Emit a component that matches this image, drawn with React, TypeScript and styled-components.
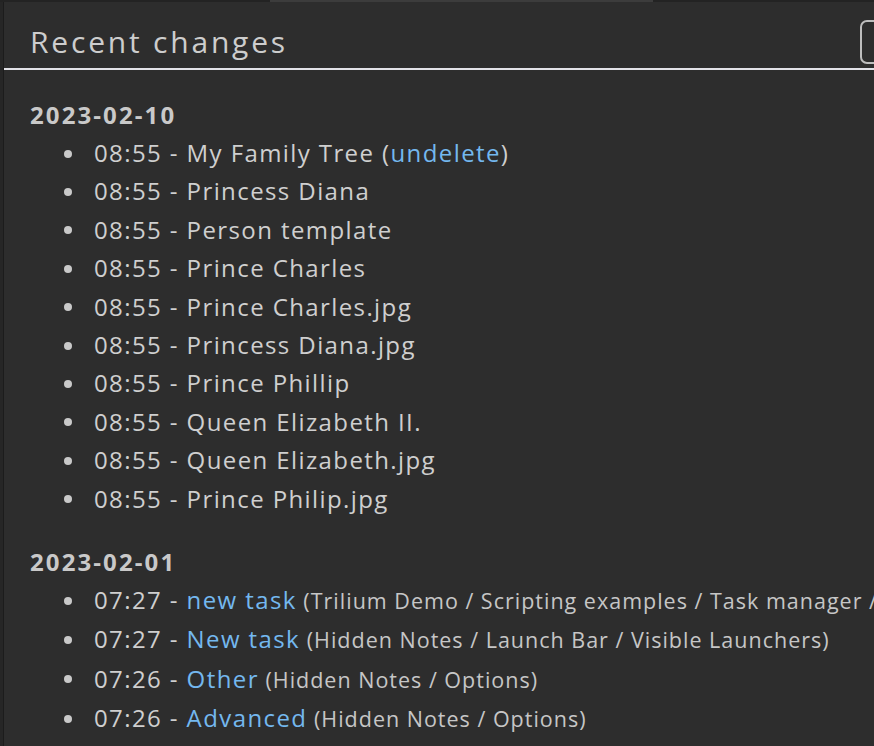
import { createGlobalStyle } from "styled-components";
import styled from "styled-components";

const GlobalStyle = createGlobalStyle`
  html, body {
    margin: 0;
    padding: 0;
    background: #232323;
    overflow: hidden;
  }
  body {
    font-family: "Open Sans", "Noto Sans", sans-serif;
    color: #cfcfcf;
  }
`;

type Change = {
  time: string;
  title: string;
  link?: boolean;
  path?: string;
  undelete?: boolean;
};

type Day = { date: string; changes: Change[] };

const days: Day[] = [
  {
    date: "2023-02-10",
    changes: [
      { time: "08:55", title: "My Family Tree", undelete: true },
      { time: "08:55", title: "Princess Diana" },
      { time: "08:55", title: "Person template" },
      { time: "08:55", title: "Prince Charles" },
      { time: "08:55", title: "Prince Charles.jpg" },
      { time: "08:55", title: "Princess Diana.jpg" },
      { time: "08:55", title: "Prince Phillip" },
      { time: "08:55", title: "Queen Elizabeth II." },
      { time: "08:55", title: "Queen Elizabeth.jpg" },
      { time: "08:55", title: "Prince Philip.jpg" },
    ],
  },
  {
    date: "2023-02-01",
    changes: [
      {
        time: "07:27",
        title: "new task",
        link: true,
        path: "Trilium Demo / Scripting examples / Task manager / Tasks",
      },
      {
        time: "07:27",
        title: "New task",
        link: true,
        path: "Hidden Notes / Launch Bar / Visible Launchers",
      },
      { time: "07:26", title: "Other", link: true, path: "Hidden Notes / Options" },
      { time: "07:26", title: "Advanced", link: true, path: "Hidden Notes / Options" },
      { time: "07:26", title: "ETAPI", link: true, path: "Hidden Notes / Options" },
    ],
  },
];

const Screen = styled.div`
  height: 746px;
  display: flex;
  flex-direction: column;
  overflow: hidden;
`;

const TopStrip = styled.div`
  height: 2px;
  flex: none;
  display: flex;
  padding-left: 270px;
`;

const TopBar = styled.div`
  width: 383px;
  background: #3c3c3c;
`;

const Backdrop = styled.div`
  flex: 1;
  display: flex;
  min-height: 0;
`;

const SideEdge = styled.div`
  width: 3px;
  flex: none;
  background: #262626;
  border-right: 1px solid #1c1c1c;
`;

const Dialog = styled.div`
  flex: 1;
  min-width: 0;
  background: #2d2d2d;
  overflow: hidden;
`;

const Header = styled.div`
  box-sizing: border-box;
  height: 68px;
  display: flex;
  align-items: flex-start;
  justify-content: space-between;
  padding: 20px 0 0 26px;
  border-bottom: 2px solid #e2e2e8;
`;

const Title = styled.h4`
  margin: 0;
  font-size: 30px;
  line-height: 40px;
  font-weight: 400;
  letter-spacing: 2.8px;
  color: #cdcdcd;
`;

const CloseButton = styled.button`
  flex: none;
  width: 40px;
  height: 44px;
  margin-right: -26px;
  margin-top: -2px;
  background: transparent;
  border: 2px solid #bdbdbd;
  border-radius: 7px;
`;

const Body = styled.div`
  padding: 29px 0 0 26px;
`;

const DateHeading = styled.div`
  font-size: 24px;
  font-weight: 700;
  letter-spacing: 2.1px;
  color: #c9c9c9;
  line-height: 32px;
  margin-bottom: 3px;
`;

const List = styled.ul`
  margin: 0 0 28px 0;
  padding-left: 64px;
  font-size: 24px;
  line-height: 38.4px;
  letter-spacing: 1.4px;
  white-space: nowrap;
  list-style: none;
`;

const Item = styled.li`
  &::before {
    content: "";
    display: inline-block;
    width: 8px;
    height: 8px;
    border-radius: 50%;
    background: #c9c9c9;
    margin-left: -30px;
    margin-right: 22px;
    vertical-align: middle;
    position: relative;
    top: -2px;
  }
`;

const Link = styled.a`
  color: #74b8ef;
  text-decoration: none;
`;

const Path = styled.small`
  font-size: 21.5px;
  letter-spacing: 1px;
  color: #c6c6c6;
`;

export default function App() {
  return (
    <>
      <GlobalStyle />
      <Screen>
        <TopStrip>
          <TopBar />
        </TopStrip>
        <Backdrop>
          <SideEdge />
          <Dialog>
            <Header>
              <Title>Recent changes</Title>
              <CloseButton aria-label="Close" />
            </Header>
            <Body>
              {days.map((day) => (
                <div key={day.date}>
                  <DateHeading>{day.date}</DateHeading>
                  <List>
                    {day.changes.map((c, i) => (
                      <Item key={i}>
                        {c.time} -{" "}
                        {c.link ? <Link href="#">{c.title}</Link> : c.title}
                        {c.undelete && (
                          <>
                            {" "}(<Link href="#">undelete</Link>)
                          </>
                        )}
                        {c.path && <Path> ({c.path})</Path>}
                      </Item>
                    ))}
                  </List>
                </div>
              ))}
            </Body>
          </Dialog>
        </Backdrop>
      </Screen>
    </>
  );
}
